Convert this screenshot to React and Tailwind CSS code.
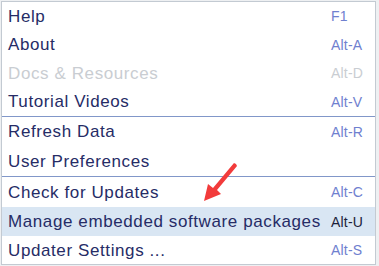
import React from 'react';

const groups = [
    [
        { label: 'Help', key: 'F1', h: 'h-[28px]' },
        { label: 'About', key: 'Alt-A', h: 'h-[29px]' },
        { label: 'Docs & Resources', key: 'Alt-D', disabled: true, h: 'h-[28px]' },
        { label: 'Tutorial Videos', key: 'Alt-V', h: 'h-[29px]' },
    ],
    [
        { label: 'Refresh Data', key: 'Alt-R', h: 'h-[29px]' },
        { label: 'User Preferences', key: '', h: 'h-[30px]' },
    ],
    [
        { label: 'Check for Updates', key: 'Alt-C', h: 'h-[30px]' },
        { label: 'Manage embedded software packages', key: 'Alt-U', active: true, h: 'h-[29px]' },
        { label: 'Updater Settings ...', key: 'Alt-S', h: 'h-[28px]' },
    ],
];

const MenuItem = ({ item }) => {
    let labelColor = 'text-[#262c66]';
    let keyColor = 'text-[#6f80cf]';
    if (item.disabled) {
        labelColor = 'text-[#c9cdd2]';
        keyColor = 'text-[#c9cdd2]';
    }
    if (item.active) keyColor = 'text-[#1c1f3a]';

    return (
        <div className={`flex items-center ${item.h} pl-[6px] ${item.active ? 'bg-[#d9e6f3]' : ''}`}>
            <span className={`flex-1 text-[17px] tracking-[0.6px] leading-none ${labelColor}`}>{item.label}</span>
            <span className={`w-[44px] text-[14px] tracking-[0.2px] leading-none ${keyColor}`}>{item.key}</span>
        </div>
    );
};

export default function App() {
    return (
        <div className="w-[379px] h-[266px] bg-[#eef0f2] p-px pr-[3px] font-['Liberation_Sans',Arial,sans-serif]">
            <div className="relative h-[264px] bg-white border border-[#c3cad2]">
                {groups.map((group, gi) => (
                    <div key={gi} className={gi > 0 ? 'border-t border-[#8197c9]' : ''}>
                        {group.map(item => (
                            <MenuItem key={item.label} item={item} />
                        ))}
                    </div>
                ))}

                {/* red pointer arrow */}
                <svg className="absolute left-[198px] top-[158px]" width="40" height="44" viewBox="0 0 40 44">
                    <polygon points="36,4 37,6 17,30 21,34 4,41 8,24 13,28 34,3" fill="#f23b3b" />
                </svg>
            </div>
        </div>
    );
}
